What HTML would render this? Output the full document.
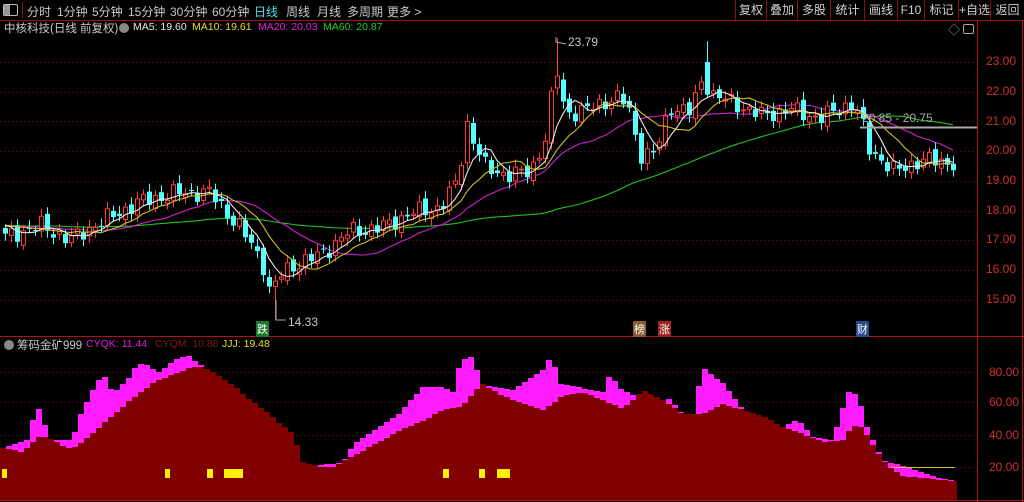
<!DOCTYPE html>
<html><head><meta charset="utf-8"><style>
*{margin:0;padding:0;box-sizing:border-box}
body{width:1024px;height:502px;background:#000;overflow:hidden;position:relative;font-family:"Liberation Sans","Noto Sans CJK SC",sans-serif;font-size:12px;color:#c8c8c8}
.t{position:absolute;white-space:nowrap}
.l{font-size:10.5px;top:21px}
#tb{position:absolute;left:0;top:0;width:1024px;height:21px;border-bottom:1px solid #a01010}
.btn{position:absolute;top:0;height:20px;border-left:1px solid #8a1010;line-height:20px;text-align:center;color:#d0d0d0;font-size:12px}
svg{position:absolute;left:0;top:0}
</style></head><body>
<div id="tb">
<div style="position:absolute;left:3px;top:4px;width:15px;height:12px;border:1px solid #bbb;border-radius:2px"></div>
<div style="position:absolute;left:4px;top:5px;width:6px;height:10px;background:#999"></div>
<div style="position:absolute;left:22px;top:2px;width:1px;height:16px;background:#8a1010"></div>
<span class="t" style="left:27px;top:3px">分时</span>
<span class="t" style="left:57px;top:3px">1分钟</span>
<span class="t" style="left:92px;top:3px">5分钟</span>
<span class="t" style="left:128px;top:3px">15分钟</span>
<span class="t" style="left:170px;top:3px">30分钟</span>
<span class="t" style="left:212px;top:3px">60分钟</span>
<span class="t" style="left:254px;top:3px;color:#4fe0e8">日线</span>
<span class="t" style="left:286px;top:3px">周线</span>
<span class="t" style="left:317px;top:3px">月线</span>
<span class="t" style="left:347px;top:3px">多周期</span>
<span class="t" style="left:387px;top:3px">更多 &gt;</span>
<div class="btn" style="left:735px;width:31px">复权</div>
<div class="btn" style="left:766px;width:31px">叠加</div>
<div class="btn" style="left:797px;width:33px">多股</div>
<div class="btn" style="left:830px;width:34px">统计</div>
<div class="btn" style="left:864px;width:33px">画线</div>
<div class="btn" style="left:897px;width:27px">F10</div>
<div class="btn" style="left:924px;width:34px">标记</div>
<div class="btn" style="left:958px;width:32px">+自选</div>
<div class="btn" style="left:990px;width:34px">返回</div>
</div>
<svg id="s" width="1024" height="502"></svg>
<div class="t l" style="left:4px;font-size:11.5px;top:20px;color:#c8c8c8">中核科技(日线 前复权)</div>
<div style="position:absolute;left:119px;top:23px;width:10px;height:10px;border-radius:50%;background:#888"></div>
<div class="t l" style="left:133px;color:#e8e8e8">MA5: 19.60</div>
<div class="t l" style="left:192px;color:#e0e020">MA10: 19.61</div>
<div class="t l" style="left:258px;color:#e020e0">MA20: 20.03</div>
<div class="t l" style="left:323px;color:#20d020">MA60: 20.87</div>
<div class="t" style="left:948px;top:21px;font-size:12px;color:#999">◇</div>
<div style="position:absolute;left:963px;top:24px;width:11px;height:10px;border:1px solid #aaa;border-radius:2px"></div>
<div style="position:absolute;left:4px;top:340px;width:10px;height:10px;border-radius:50%;background:#888"></div>
<div class="t" style="left:17px;top:337px;font-size:11.5px;color:#c8c8c8">筹码金矿999</div>
<div class="t l" style="left:86px;top:338px;color:#e020e0">CYQK: 11.44</div>
<div class="t l" style="left:155px;top:338px;color:#8a1818">CYQM: 10.88</div>
<div class="t l" style="left:222px;top:338px;color:#e0e020">JJJ: 19.48</div>
<div class="t" style="left:986px;top:54px;color:#d03030;font-size:12px">23.00</div>
<div class="t" style="left:986px;top:84px;color:#d03030;font-size:12px">22.00</div>
<div class="t" style="left:986px;top:114px;color:#d03030;font-size:12px">21.00</div>
<div class="t" style="left:986px;top:143px;color:#d03030;font-size:12px">20.00</div>
<div class="t" style="left:986px;top:173px;color:#d03030;font-size:12px">19.00</div>
<div class="t" style="left:986px;top:203px;color:#d03030;font-size:12px">18.00</div>
<div class="t" style="left:986px;top:232px;color:#d03030;font-size:12px">17.00</div>
<div class="t" style="left:986px;top:262px;color:#d03030;font-size:12px">16.00</div>
<div class="t" style="left:986px;top:292px;color:#d03030;font-size:12px">15.00</div>
<div class="t" style="left:989px;top:365px;color:#d03030;font-size:12px">80.00</div>
<div class="t" style="left:989px;top:395px;color:#d03030;font-size:12px">60.00</div>
<div class="t" style="left:989px;top:428px;color:#d03030;font-size:12px">40.00</div>
<div class="t" style="left:989px;top:460px;color:#d03030;font-size:12px">20.00</div>
<div class="t" style="left:568px;top:35px;color:#c8c8c8;font-size:12px">23.79</div>
<div class="t" style="left:288px;top:315px;color:#c8c8c8;font-size:12px">14.33</div>
<div class="t" style="left:862px;top:111px;color:#aaa;font-size:12px">20.85 - 20.75</div>
<div class="t" style="left:256px;top:321px;font-size:11px;color:#fff;background:#1a7a2a;padding:0 1px">跌</div>
<div class="t" style="left:633px;top:321px;font-size:11px;color:#fff;background:#8a5a30;padding:0 1px">榜</div>
<div class="t" style="left:658px;top:321px;font-size:11px;color:#fff;background:#a02020;padding:0 1px">涨</div>
<div class="t" style="left:856px;top:321px;font-size:11px;color:#fff;background:#2a4a8a;padding:0 1px">财</div>
<script>
var S=document.getElementById('s'),h='';
function Y(p){return 62+(23-p)*29.7}
function interp(k,x){for(var i=0;i<k.length-1;i++){if(x<=k[i+1][0]){var a=k[i],b=k[i+1];return a[1]+(b[1]-a[1])*(x-a[0])/(b[0]-a[0]);}}return k[k.length-1][1]}
[23,22,21,20,19,18,17,16,15].forEach(function(p){var y=Math.round(Y(p))+.5;h+='<line x1="0" x2="976" y1="'+y+'" y2="'+y+'" stroke="#6a1010" stroke-dasharray="1,3"/>'});
[80,60,40,20].forEach(function(v,i){var y=[372,402,435,467][i]+.5;h+='<line x1="0" x2="976" y1="'+y+'" y2="'+y+'" stroke="#6a1010" stroke-dasharray="1,3"/>'});
var K=[[5,17.1],[40,17.5],[70,17.0],[100,17.6],[140,18.3],[180,18.6],[210,18.6],[240,17.4],[262,16.3],[270,15.2],[280,15.8],[290,16.1],[320,16.5],[350,17.3],[380,17.4],[410,17.9],[440,18.1],[458,19.0],[466,21.0],[474,20.3],[486,19.4],[510,19.2],[530,19.3],[545,20.4],[556,22.8],[565,21.3],[580,21.3],[600,21.6],[615,21.8],[627,21.6],[640,19.9],[655,19.9],[670,21.5],[690,21.3],[703,22.5],[712,21.9],[735,21.6],[760,21.2],[790,21.4],[820,21.1],[850,21.6],[860,21.2],[868,20.1],[895,19.3],[920,19.7],[955,19.6]];
var N=159,cl=[],xs=[];
for(var i=0;i<60;i++)cl.push(17.5+0.2*Math.sin(i*0.7));
for(var i=0;i<N;i++){var x=5+i*6;xs.push(x);cl.push(interp(K,x)+0.22*Math.sin(i*2.3)+0.12*Math.cos(i*1.1));}
function ma(n){var r=[];for(var i=60;i<cl.length;i++){var s=0;for(var j=0;j<n;j++)s+=cl[i-j];r.push(s/n)}return r}
var c='';
for(var i=0;i<N;i++){var C=cl[60+i],O=cl[59+i]+0.12*Math.sin(i*3.7),x=xs[i];
var hi=Math.max(O,C)+0.12+0.15*Math.abs(Math.sin(i*1.9)),lo=Math.min(O,C)-0.12-0.12*Math.abs(Math.cos(i*2.7));
if(x>=272&&x<=278){lo=14.33}
if(x>=554&&x<=558){hi=23.79}
if(x>=702&&x<=708){hi=23.7;O=23.0;C=21.9}
var up=C>=O,col=up?'#ff3c3c':'#54ffff';
c+='<line x1="'+(x+.5)+'" x2="'+(x+.5)+'" y1="'+Y(hi)+'" y2="'+Y(lo)+'" stroke="'+col+'"/>';
var t=Y(Math.max(O,C)),b=Y(Math.min(O,C));if(b-t<1)b=t+1;
if(up)c+='<rect x="'+(x-1.5)+'" y="'+t+'" width="4" height="'+(b-t)+'" fill="#000" stroke="'+col+'"/>';
else c+='<rect x="'+(x-2)+'" y="'+t+'" width="5" height="'+(b-t)+'" fill="'+col+'"/>';}
function line(a,col){var p=a.map(function(v,i){return xs[i]+','+Y(v).toFixed(1)}).join(' ');return '<polyline points="'+p+'" fill="none" stroke="'+col+'" stroke-width="1.1"/>'}
h+=line(ma(60),'#20c020')+line(ma(20),'#d020d0')+c+line(ma(10),'#d0c020')+line(ma(5),'#e8e8e8');
h+='<line x1="860" x2="977" y1="127.5" y2="127.5" stroke="#aaa" stroke-width="2"/>';
h+='<polyline points="556,37 556,42 566,44" fill="none" stroke="#aaa"/><polyline points="276,300 276,320 286,320" fill="none" stroke="#aaa"/>';
var R=[[0,448],[20,452],[35,437],[45,437],[60,446],[70,449],[90,433],[110,415],[130,398],[150,383],[170,374],[190,367],[200,367],[210,372],[230,385],[250,402],[265,413],[280,426],[290,433],[300,462],[320,467],[330,467],[400,429],[420,421],[440,410],[460,406],[470,393],[480,384],[500,396],[520,403],[540,410],[560,396],[580,392],[600,400],[620,409],[640,390],[660,400],[680,414],[700,414],[720,404],[740,410],[760,416],[780,427],[800,434],[820,442],[840,440],[850,425],[860,428],[870,445],[880,460],[890,470],[900,476],[920,478],[940,480],[955,481]];
var M=[[0,448],[25,440],[30,420],[38,405],[45,440],[70,440],[75,420],[90,390],[100,373],[110,393],[125,380],[135,363],[145,365],[155,373],[175,358],[185,355],[200,367],[215,375],[240,400],[270,420],[285,440],[300,466],[340,463],[350,445],[365,435],[380,425],[395,415],[420,387],[440,387],[450,392],[458,360],[470,356],[478,384],[510,390],[540,370],[548,356],[558,384],[600,392],[608,372],[615,388],[640,400],[660,400],[665,398],[680,414],[690,414],[700,367],[712,378],[718,380],[740,410],[760,416],[780,427],[795,420],[810,437],[830,440],[845,392],[855,395],[865,430],[880,460],[930,476],[940,479],[955,481]];
var rp='0,500',mp='0,500';
for(var x=0;x<=955;x+=6){var r=Math.round(interp(R,x)),m=Math.min(r,Math.round(interp(M,x)));var x2=Math.min(x+6,957);rp+=' '+x+','+r+' '+x2+','+r;mp+=' '+x+','+m+' '+x2+','+m;}
rp+=' 957,500';mp+=' 957,500';
h+='<polygon points="'+mp+'" fill="#ff1cff"/><polygon points="'+rp+'" fill="#800000"/>';
[[2,7],[165,170],[207,213],[224,243],[443,449],[479,485],[497,510]].forEach(function(b){h+='<rect x="'+b[0]+'" y="469" width="'+(b[1]-b[0])+'" height="9" fill="#ffef00"/>'});
h+='<line x1="891" x2="955" y1="467.5" y2="467.5" stroke="#d0c020"/>';
h+='<line x1="977.5" x2="977.5" y1="20" y2="502" stroke="#b01010"/><line x1="1022.5" x2="1022.5" y1="20" y2="502" stroke="#b01010"/>';
h+='<line x1="0" x2="1024" y1="336.5" y2="336.5" stroke="#b01010"/><line x1="0" x2="1024" y1="500.5" y2="500.5" stroke="#b01010"/>';
S.innerHTML=h;
</script>
</body></html>
